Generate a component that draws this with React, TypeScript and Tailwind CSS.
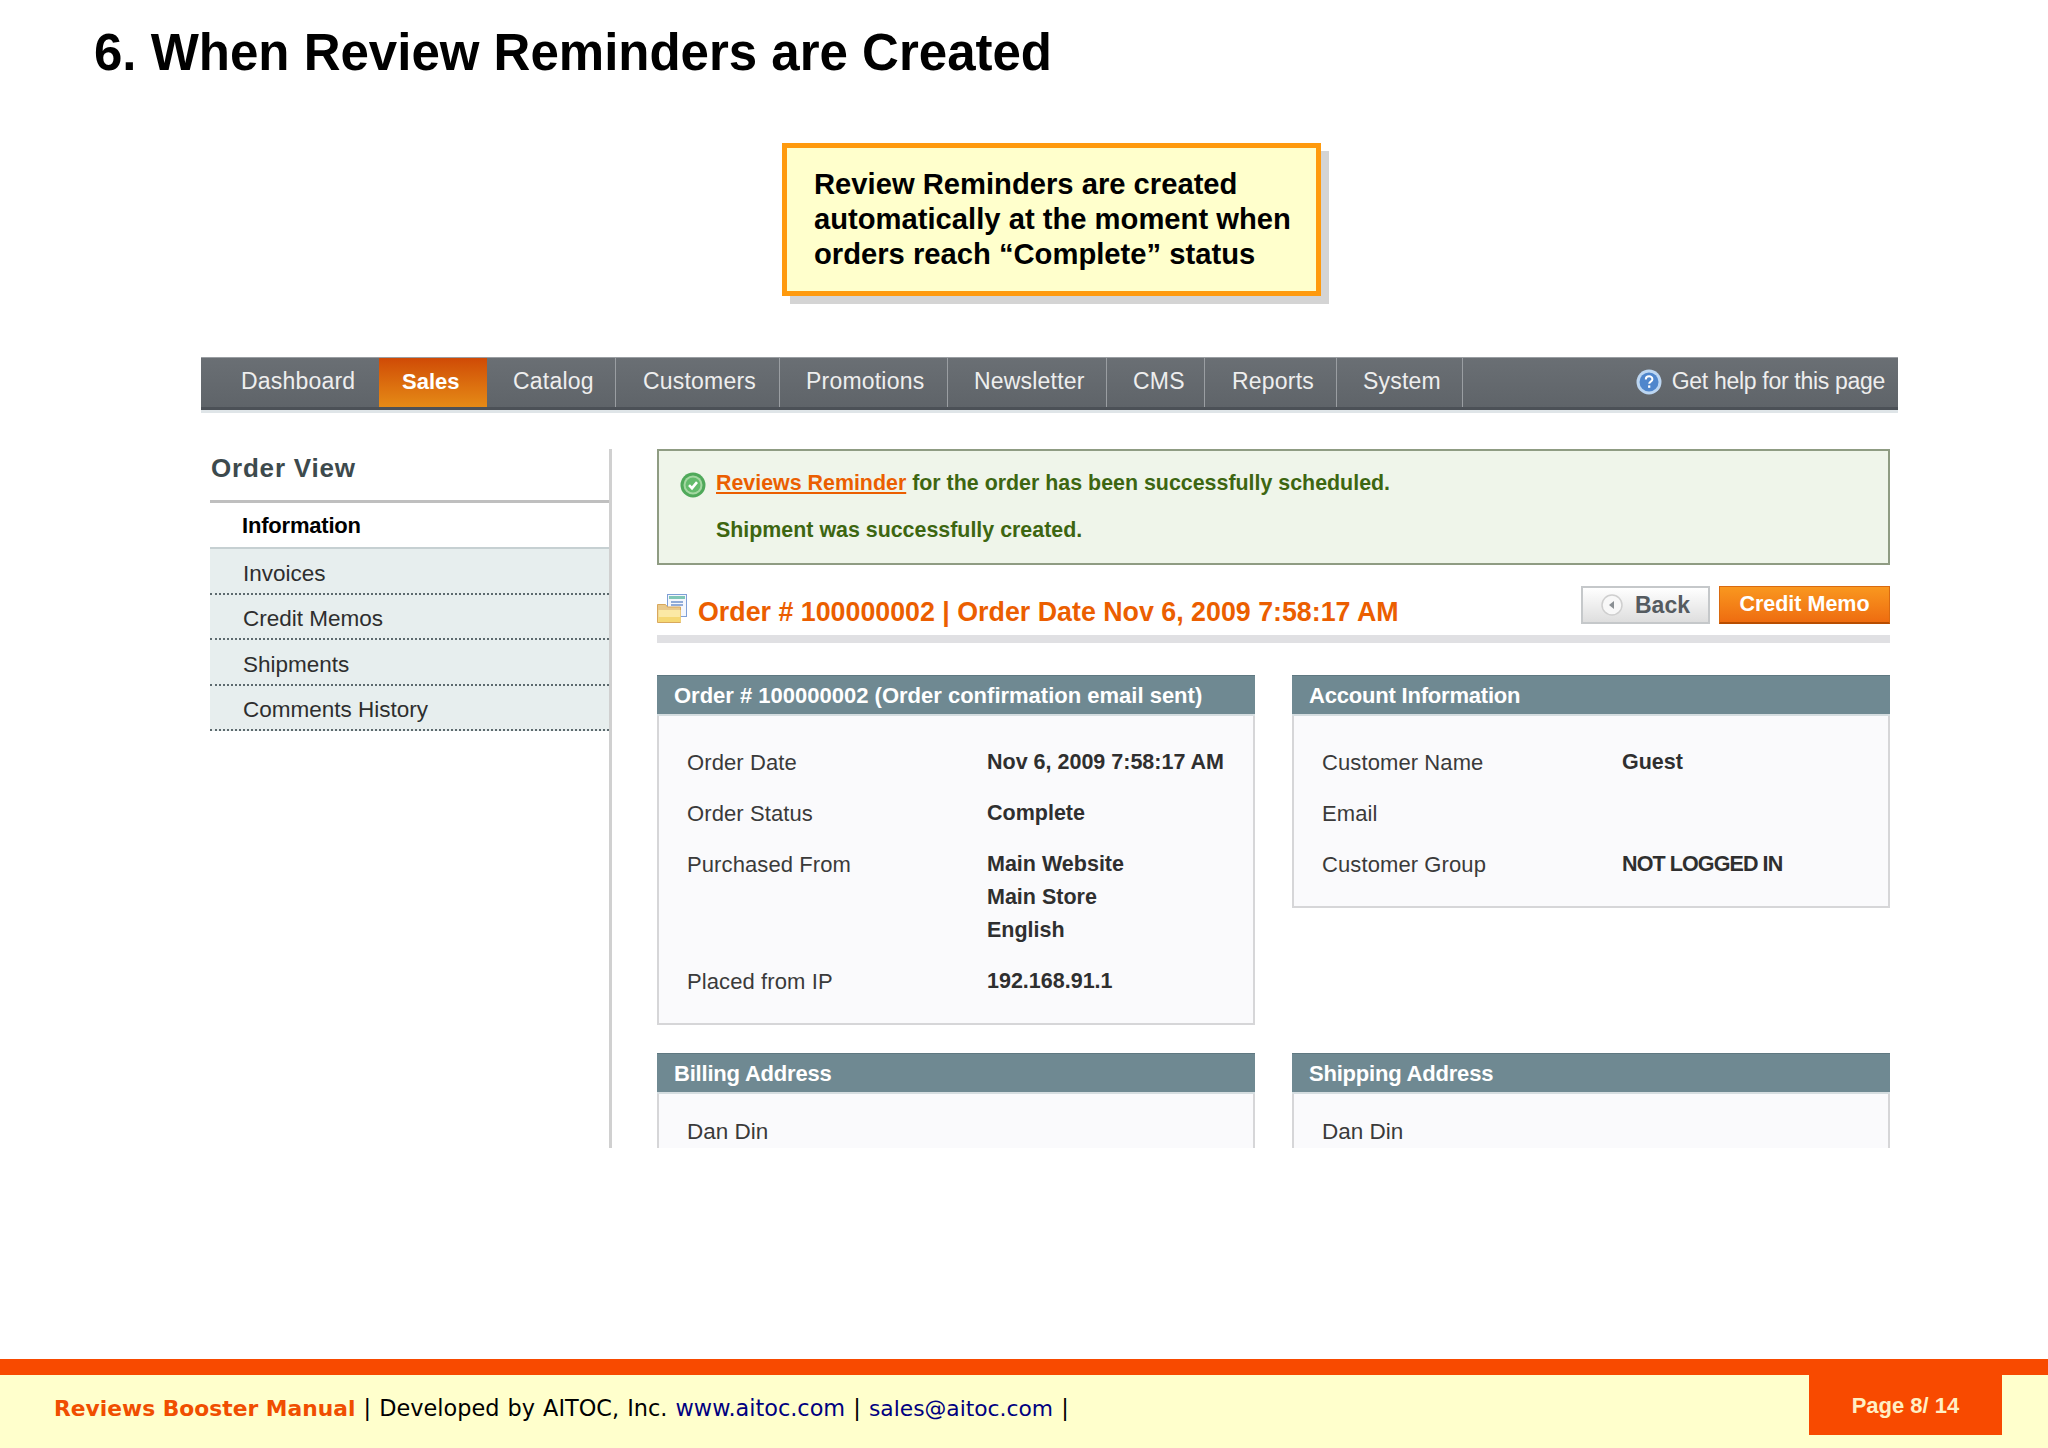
import React from 'react';

const NAV_ITEMS = [
  { label: 'Dashboard', cls: 'w-[178px] pl-[40px] tracking-[0.2px]' },
  { label: 'Sales', cls: 'w-[108px] pl-[23px] text-[22px] font-bold text-white bg-gradient-to-b from-[#cf4a06] to-[#e58a16]' },
  { label: 'Catalog', cls: 'w-[129px] pl-[26px] tracking-[0.2px] border-r border-[#9a9ea2]' },
  { label: 'Customers', cls: 'w-[164px] pl-[27px] tracking-[0.2px] border-r border-[#9a9ea2]' },
  { label: 'Promotions', cls: 'w-[168px] pl-[26px] tracking-[0.2px] border-r border-[#9a9ea2]' },
  { label: 'Newsletter', cls: 'w-[159px] pl-[26px] tracking-[0.2px] border-r border-[#9a9ea2]' },
  { label: 'CMS', cls: 'w-[98px] pl-[26px] tracking-[0.2px] border-r border-[#9a9ea2]' },
  { label: 'Reports', cls: 'w-[132px] pl-[27px] tracking-[0.2px] border-r border-[#9a9ea2]' },
  { label: 'System', cls: 'w-[126px] pl-[26px] tracking-[0.2px] border-r border-[#9a9ea2]' },
];

const SIDE_TABS = ['Invoices', 'Credit Memos', 'Shipments', 'Comments History'];

const Row = ({ label, value }: { label: string; value?: React.ReactNode }) => (
  <div className="flex">
    <div className="w-[300px] text-[22px] text-[#3a3a3a] tracking-[0.1px]">{label}</div>
    <div className="text-[21.5px] font-bold text-[#2f2f2f]">{value}</div>
  </div>
);

const BoxHead = ({ children, wide }: { children: React.ReactNode; wide?: boolean }) => (
  <div
    className={`h-[41px] bg-[#6f8992] border-t border-[#5f7881] border-b-2 border-b-[#d5dde0] pl-[17px] flex items-center text-[22px] font-bold text-white ${
      wide ? 'tracking-[0px]' : 'tracking-[-0.2px]'
    }`}
  >
    {children}
  </div>
);

const HelpIcon = () => (
  <svg width="26" height="26" viewBox="0 0 26 26">
    <circle cx="13" cy="13" r="12.5" fill="#bcd6f2" />
    <circle cx="13" cy="13" r="9.5" fill="#4f86cc" />
    <path d="M9.8 10.4c0-4.2 6.6-4.2 6.6-.2 0 2.6-3.2 2.2-3.2 4.6" fill="none" stroke="#ffffff" strokeWidth="2" />
    <rect x="12.1" y="16.4" width="2.2" height="2.4" fill="#ffffff" />
  </svg>
);

const CheckIcon = () => (
  <svg width="26" height="26" viewBox="0 0 26 26">
    <circle cx="13" cy="13" r="12.5" fill="#4fa95a" />
    <circle cx="13" cy="13" r="9.5" fill="#a4d8a2" />
    <circle cx="13" cy="13" r="7.5" fill="#63bb6c" />
    <path d="M9 13.2l3 3 5-6" fill="none" stroke="#ffffff" strokeWidth="2.6" />
  </svg>
);

const OrderIcon = () => (
  <svg width="30" height="29" viewBox="0 0 30 29">
    <rect x="10.5" y="0.5" width="19" height="22" fill="#f4f7fd" stroke="#7f9fd6" />
    <rect x="12" y="2" width="16" height="3" fill="#7fc6b6" />
    <path d="M14 8h12M14 11h12M14 14h8" stroke="#6f93cc" strokeWidth="1.6" />
    <path d="M0.5 13V10.5h8l2 2.5h13v15.5H0.5z" fill="#e9c98b" stroke="#d9a85c" />
    <rect x="1.5" y="16" width="22" height="12" fill="#fbe9a4" />
    <rect x="1.5" y="23" width="22" height="5" fill="#f5d873" />
  </svg>
);

const BackIcon = () => (
  <svg width="22" height="22" viewBox="0 0 22 22">
    <circle cx="11" cy="11" r="10" fill="#f8f8f8" stroke="#cfcfcf" strokeWidth="1.5" />
    <path d="M13 7v8l-5-4z" fill="#8a8f93" />
  </svg>
);

export default function App() {
  return (
    <div className="relative w-[2048px] h-[1448px] bg-white overflow-hidden font-['Liberation_Sans',Arial,sans-serif] flex flex-col">
      <h1 className="pl-[94px] pt-[21px] h-[143px] text-[51px] leading-[64px] font-bold text-black">
        6. When Review Reminders are Created
      </h1>

      <div className="ml-[782px] w-[548px] h-[161px] relative">
        <div className="w-[539px] h-[153px] bg-[#ffffcc] border-[5px] border-[#ff9a0d] shadow-[8px_8px_0_#d4d4d4] pl-[27px] pt-[19px] text-[29.2px] leading-[35px] font-bold text-black">
          Review Reminders are created
          <br />
          automatically at the moment when
          <br />
          orders reach “Complete” status
        </div>
      </div>

      <div className="ml-[201px] mt-[53px] w-[1697px] h-[791px] overflow-hidden">
        <div className="h-[50px] bg-gradient-to-b from-[#6a6f74] to-[#5f6469] border-t border-[#9a9ea2] flex justify-between text-[23px] text-[#eeeeee] shadow-[0_3px_0_#4c5157,0_6px_0_#dfe5e8]">
          <div className="flex">
            {NAV_ITEMS.map((item) => (
              <div key={item.label} className={`h-full flex items-center pb-[2px] ${item.cls}`}>
                {item.label}
              </div>
            ))}
          </div>
          <div className="flex items-center pr-[13px] gap-[10px] pb-[2px] tracking-[-0.3px]">
            <HelpIcon />
            Get help for this page
          </div>
        </div>

        <div className="flex mt-[42px] pl-[9px] h-full">
          <div className="w-[402px] border-r-[3px] border-[#d0d0d0] shrink-0">
            <div className="h-[54px] pt-[3px] border-b-[3px] border-[#bfbfbf] text-[26px] font-bold leading-[32px] text-[#3d4a4d] tracking-[0.8px] pl-[1px]">
              Order View
            </div>
            <div className="h-[44px] pl-[32px] flex items-center text-[22px] font-bold text-black tracking-[-0.2px]">
              Information
            </div>
            <div className="bg-[#e7eeee] border-t-[2px] border-[#c6d0d2] text-[22.5px] text-[#2e2e2e]">
              {SIDE_TABS.map((tab) => (
                <div key={tab} className="h-[45.5px] pl-[33px] pt-[6px] flex items-center border-b-[2px] border-dotted border-[#5d6a6e]">
                  {tab}
                </div>
              ))}
            </div>
          </div>

          <div className="ml-[45px] w-[1233px]">
            <div className="h-[116px] bg-[#eff5ea] border-2 border-[#8f9c83] pl-[21px] pt-[18px] text-[21.4px] font-bold text-[#3d6611] leading-[28px]">
              <div className="flex items-center gap-[10px]">
                <span className="relative top-[2px]">
                  <CheckIcon />
                </span>
                <div>
                  <span className="text-[#eb5e00] underline">Reviews Reminder</span> for the order has been successfully scheduled.
                </div>
              </div>
              <div className="pl-[36px] mt-[19px]">Shipment was successfully created.</div>
            </div>

            <div className="mt-[21px] flex justify-between h-[49px]">
              <div className="flex items-start gap-[11px] pt-[8px] text-[26.8px] font-bold text-[#eb5e00] leading-[36px]">
                <OrderIcon />
                <span>Order # 100000002 | Order Date Nov 6, 2009 7:58:17 AM</span>
              </div>
              <div className="flex gap-[9px] h-[38px] font-bold">
                <div className="w-[129px] border-2 border-[#c5c8ca] bg-gradient-to-b from-[#ffffff] to-[#dedede] text-[23px] text-[#555b60] flex items-center pl-[18px] gap-[12px]">
                  <BackIcon />
                  Back
                </div>
                <div className="w-[171px] border border-[#d96a10] border-b-2 border-b-[#b84d00] bg-gradient-to-b from-[#f9971f] to-[#ee6c10] text-[21.5px] text-white flex items-center justify-center">
                  Credit Memo
                </div>
              </div>
            </div>
            <div className="h-[8px] bg-[#e0e0e3]" />

            <div className="mt-[32px] grid grid-cols-[598px_598px] gap-x-[37px]">
              <div>
                <BoxHead wide>Order # 100000002 (Order confirmation email sent)</BoxHead>
                <div className="h-[309px] bg-[#fafafc] border-2 border-t-0 border-[#d6d6d8] pl-[28px] pt-[30px] flex flex-col gap-[18px] leading-[33px]">
                  <Row label="Order Date" value="Nov 6, 2009 7:58:17 AM" />
                  <Row label="Order Status" value="Complete" />
                  <Row
                    label="Purchased From"
                    value={
                      <>
                        Main Website
                        <br />
                        Main Store
                        <br />
                        English
                      </>
                    }
                  />
                  <Row label="Placed from IP" value="192.168.91.1" />
                </div>
              </div>
              <div>
                <BoxHead>Account Information</BoxHead>
                <div className="h-[192px] bg-[#fafafc] border-2 border-t-0 border-[#d6d6d8] pl-[28px] pt-[30px] flex flex-col gap-[18px] leading-[33px]">
                  <Row label="Customer Name" value="Guest" />
                  <Row label="Email" />
                  <Row label="Customer Group" value={<span className="tracking-[-0.9px]">NOT LOGGED IN</span>} />
                </div>
              </div>
              <div className="mt-[28px]">
                <BoxHead>Billing Address</BoxHead>
                <div className="h-[100px] bg-[#fafafc] border-2 border-t-0 border-[#d6d6d8] pl-[28px] pt-[21px] text-[22.5px] leading-[33px] text-[#3a3a3a]">
                  Dan Din
                </div>
              </div>
              <div className="mt-[28px]">
                <BoxHead>Shipping Address</BoxHead>
                <div className="h-[100px] bg-[#fafafc] border-2 border-t-0 border-[#d6d6d8] pl-[28px] pt-[21px] text-[22.5px] leading-[33px] text-[#3a3a3a]">
                  Dan Din
                </div>
              </div>
            </div>
          </div>
        </div>
      </div>

      <div className="mt-auto h-[89px] bg-[#ffffcc] border-t-[16px] border-[#f84a00] flex justify-between pr-[46px]">
        <div className="pl-[54px] pt-[16px] font-['DejaVu_Sans',Verdana,sans-serif] text-[22.4px] leading-[34px] text-black [word-spacing:1px]">
          <span className="text-[21.8px] font-bold text-[#f04e00] [word-spacing:0px]">Reviews Booster Manual</span> | Developed by AITOC, Inc.{' '}
          <span className="text-[#000080]">www.aitoc.com</span> | <span className="text-[21.8px] text-[#000080]">sales@aitoc.com</span> |
        </div>
        <div className="w-[193px] h-[60px] bg-[#f84a00] flex items-center justify-center text-[22px] font-bold text-[#ffefc4]">
          Page 8/ 14
        </div>
      </div>
    </div>
  );
}
